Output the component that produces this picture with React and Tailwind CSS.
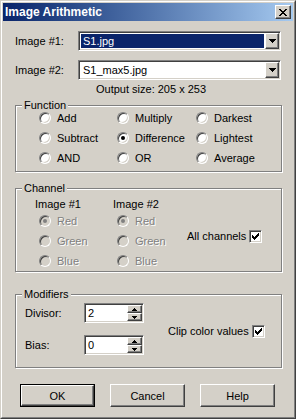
import React from 'react';

const sunken =
  'border border-t-[#808080] border-l-[#808080] border-r-white border-b-white shadow-[inset_1px_1px_0_#404040,inset_-1px_-1px_0_#d4d0c8]';
const raised =
  'border border-t-white border-l-white border-r-[#404040] border-b-[#404040] shadow-[inset_-1px_-1px_0_#808080]';
const dim = 'text-[#808080] [text-shadow:1px_1px_0_white]';

const Group = ({ title, className, children }) => (
  <div
    className={`relative w-[267px] border border-[#808080] shadow-[inset_1px_1px_0_white,1px_1px_0_white] ${className}`}
  >
    <span className="absolute -top-[8px] left-[6px] bg-[#d4d0c8] px-[2px] leading-[14px]">
      {title}
    </span>
    {children}
  </div>
);

const Radio = ({ label, checked, disabled }) => (
  <div className="flex h-[20px] items-center gap-[6px]">
    <div
      className={`flex h-[12px] w-[12px] items-center justify-center rounded-full border border-t-[#808080] border-l-[#808080] border-r-white border-b-white shadow-[inset_1px_1px_0_#404040,inset_-1px_-1px_0_#d4d0c8] ${disabled ? 'bg-[#d4d0c8]' : 'bg-white'}`}
    >
      {checked && (
        <div className={`h-[4px] w-[4px] rounded-full ${disabled ? 'bg-[#808080]' : 'bg-black'}`} />
      )}
    </div>
    <span className={disabled ? dim : ''}>{label}</span>
  </div>
);

const Check = () => (
  <div className={`flex h-[13px] w-[13px] items-center justify-center bg-white ${sunken}`}>
    <svg width="7" height="7" viewBox="0 0 7 7" shapeRendering="crispEdges">
      <path d="M0 2h1v1h1v1h1v-1h1v-1h1v-1h1v-1h1v3h-1v1h-1v1h-1v1h-1v1h-1v-1h-1v-1h-1z" fill="black" />
    </svg>
  </div>
);

const DownArrow = () => (
  <svg width="7" height="4" viewBox="0 0 7 4" shapeRendering="crispEdges">
    <path d="M0 0h7v1h-1v1h-1v1h-1v1h-1v-1h-1v-1h-1v-1h-1z" fill="black" />
  </svg>
);

const Combo = ({ value, selected }) => (
  <div className={`flex h-[20px] w-[203px] bg-white p-[1px] ${sunken}`}>
    <div className="flex flex-1 p-[1px]">
      <div
        className={`flex flex-1 items-center pl-[2px] ${selected ? 'bg-[#0a246a] text-white' : ''}`}
      >
        {value}
      </div>
    </div>
    <div className={`flex w-[14px] items-center justify-center bg-[#d4d0c8] ${raised}`}>
      <DownArrow />
    </div>
  </div>
);

const SpinBtn = ({ up }) => (
  <div className={`flex h-[8px] items-center justify-center bg-[#d4d0c8] ${raised}`}>
    <svg width="5" height="3" viewBox="0 0 5 3" shapeRendering="crispEdges">
      {up ? (
        <path d="M2 0h1v1h1v1h1v1h-5v-1h1v-1h1z" fill="black" />
      ) : (
        <path d="M0 0h5v1h-1v1h-1v1h-1v-1h-1v-1h-1z" fill="black" />
      )}
    </svg>
  </div>
);

const Spin = ({ value }) => (
  <div className={`flex h-[20px] w-[60px] bg-white p-[1px] ${sunken}`}>
    <div className="flex flex-1 items-center pl-[2px]">{value}</div>
    <div className="flex w-[15px] flex-col">
      <SpinBtn up />
      <SpinBtn />
    </div>
  </div>
);

const Button = ({ label, primary }) => (
  <div className={`h-[23px] w-[75px] ${primary ? 'border border-black' : ''}`}>
    <div className={`flex h-full w-full items-center justify-center bg-[#d4d0c8] ${raised}`}>
      {label}
    </div>
  </div>
);

export default function App() {
  return (
    <div
      className="h-[419px] w-[296px] border border-t-[#d4d0c8] border-l-[#d4d0c8] border-r-[#404040] border-b-[#404040] bg-[#d4d0c8] text-[11px] leading-[14px] text-black"
      style={{ fontFamily: '"Liberation Sans", Arial, sans-serif' }}
    >
      <div className="flex h-full flex-col border border-t-white border-l-white border-r-[#808080] border-b-[#808080] p-[1px]">
        <div className="flex h-[18px] items-center justify-between bg-linear-to-r from-[#0a246a] to-[#a6caf0] pl-[2px] pr-[2px]">
          <span className="text-[12px] font-bold text-white">Image Arithmetic</span>
          <div className={`flex h-[14px] w-[16px] items-center justify-center bg-[#d4d0c8] ${raised}`}>
            <svg width="8" height="7" viewBox="0 0 8 7" shapeRendering="crispEdges">
              <path
                d="M0 0h2v1h1v1h2v-1h1v-1h2v1h-1v1h-1v1h-1v1h1v1h1v1h1v1h-2v-1h-1v-1h-2v1h-1v1h-2v-1h1v-1h1v-1h1v-1h-1v-1h-1v-1h-1z"
                fill="black"
              />
            </svg>
          </div>
        </div>

        <div className="flex flex-col pl-[12px]">
          <div className="mt-[10px] flex items-center">
            <span className="w-[63px]">Image #1:</span>
            <Combo value="S1.jpg" selected />
          </div>
          <div className="mt-[9px] flex items-center">
            <span className="w-[63px]">Image #2:</span>
            <Combo value="S1_max5.jpg" />
          </div>
          <div className="mt-[2px] pl-[81px]">Output size: 205 x 253</div>

          <Group title="Function" className="mt-[9px] h-[67px]">
            <div className="grid grid-cols-[78px_79px_auto] pl-[23px] pt-[2px]">
              <Radio label="Add" />
              <Radio label="Multiply" />
              <Radio label="Darkest" />
              <Radio label="Subtract" />
              <Radio label="Difference" checked />
              <Radio label="Lightest" />
              <Radio label="AND" />
              <Radio label="OR" />
              <Radio label="Average" />
            </div>
          </Group>

          <Group title="Channel" className="mt-[16px] h-[84px]">
            <div className="flex pl-[19px] pt-[8px]">
              <div className="flex w-[78px] flex-col">
                <span>Image #1</span>
                <div className="pl-[4px]">
                  <Radio label="Red" checked disabled />
                  <Radio label="Green" disabled />
                  <Radio label="Blue" disabled />
                </div>
              </div>
              <div className="flex w-[74px] flex-col">
                <span>Image #2</span>
                <div className="pl-[4px]">
                  <Radio label="Red" checked disabled />
                  <Radio label="Green" disabled />
                  <Radio label="Blue" disabled />
                </div>
              </div>
              <div className="mt-[32px] flex h-[14px] items-center gap-[3px]">
                <span>All channels</span>
                <Check />
              </div>
            </div>
          </Group>

          <Group title="Modifiers" className="mt-[22px] h-[74px]">
            <div className="flex items-center pl-[9px] pt-[8px]">
              <div className="flex flex-col gap-[12px]">
                <div className="flex items-center">
                  <span className="w-[59px]">Divisor:</span>
                  <Spin value="2" />
                </div>
                <div className="flex items-center">
                  <span className="w-[59px]">Bias:</span>
                  <Spin value="0" />
                </div>
              </div>
              <div className="ml-[24px] mt-[4px] flex items-center gap-[3px]">
                <span>Clip color values</span>
                <Check />
              </div>
            </div>
          </Group>

          <div className="mt-[16px] flex gap-[15px] pl-[5px]">
            <Button label="OK" primary />
            <Button label="Cancel" />
            <Button label="Help" />
          </div>
        </div>
      </div>
    </div>
  );
}
